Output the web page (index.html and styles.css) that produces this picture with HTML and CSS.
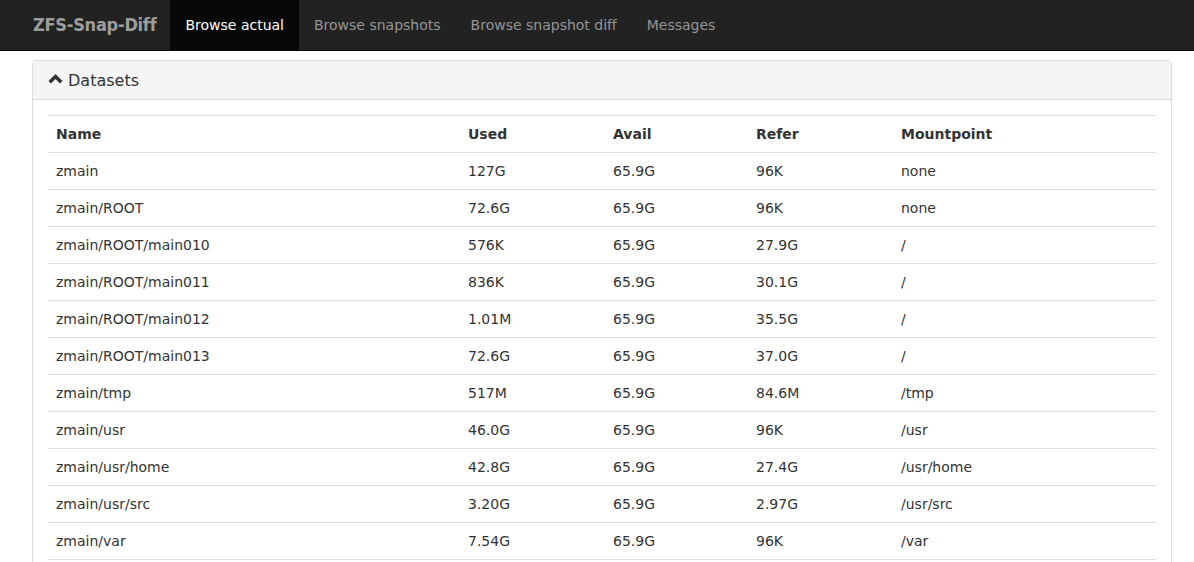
FILE: index.html
```html
<!DOCTYPE html>
<html>
<head>
<meta charset="utf-8">
<link rel="stylesheet" href="styles.css">
</head>
<body>
<nav class="navbar">
  <a class="brand" href="#">ZFS-Snap-Diff</a>
  <ul class="nav">
    <li class="active"><a href="#">Browse actual</a></li>
    <li><a href="#">Browse snapshots</a></li>
    <li><a href="#">Browse snapshot diff</a></li>
    <li><a href="#">Messages</a></li>
  </ul>
</nav>
<main class="container">
  <section class="panel">
    <div class="panel-heading">
      <svg class="chev" width="15" height="12" viewBox="0 0 15 12"><path d="M7.5 1 L14.5 8 L12 10.5 L7.5 6 L3 10.5 L0.5 8 Z" fill="#333"/></svg>
      <span class="panel-title">Datasets</span>
    </div>
    <div class="panel-body">
      <table class="table">
        <thead>
          <tr><th class="c-name">Name</th><th class="c-used">Used</th><th class="c-avail">Avail</th><th class="c-refer">Refer</th><th>Mountpoint</th></tr>
        </thead>
        <tbody>
          <tr><td>zmain</td><td>127G</td><td>65.9G</td><td>96K</td><td>none</td></tr>
          <tr><td>zmain/ROOT</td><td>72.6G</td><td>65.9G</td><td>96K</td><td>none</td></tr>
          <tr><td>zmain/ROOT/main010</td><td>576K</td><td>65.9G</td><td>27.9G</td><td>/</td></tr>
          <tr><td>zmain/ROOT/main011</td><td>836K</td><td>65.9G</td><td>30.1G</td><td>/</td></tr>
          <tr><td>zmain/ROOT/main012</td><td>1.01M</td><td>65.9G</td><td>35.5G</td><td>/</td></tr>
          <tr><td>zmain/ROOT/main013</td><td>72.6G</td><td>65.9G</td><td>37.0G</td><td>/</td></tr>
          <tr><td>zmain/tmp</td><td>517M</td><td>65.9G</td><td>84.6M</td><td>/tmp</td></tr>
          <tr><td>zmain/usr</td><td>46.0G</td><td>65.9G</td><td>96K</td><td>/usr</td></tr>
          <tr><td>zmain/usr/home</td><td>42.8G</td><td>65.9G</td><td>27.4G</td><td>/usr/home</td></tr>
          <tr><td>zmain/usr/src</td><td>3.20G</td><td>65.9G</td><td>2.97G</td><td>/usr/src</td></tr>
          <tr><td>zmain/var</td><td>7.54G</td><td>65.9G</td><td>96K</td><td>/var</td></tr>
        </tbody>
      </table>
    </div>
  </section>
</main>
</body>
</html>
```
FILE: styles.css
```css
* { box-sizing: border-box; }
html, body { margin: 0; padding: 0; }
body {
  font-family: "DejaVu Sans", Verdana, sans-serif;
  font-size: 14px;
  line-height: 20px;
  color: #333;
  background: #fff;
  overflow: hidden;
}
a { text-decoration: none; }
.navbar {
  height: 51px;
  background: #222;
  border-bottom: 1px solid #080808;
  display: flex;
  align-items: stretch;
  padding-left: 18px;
}
.brand {
  font-family: "DejaVu Sans Condensed", "DejaVu Sans", sans-serif;
  color: #9d9d9d;
  font-size: 18px;
  font-weight: bold;
  letter-spacing: -0.25px;
  line-height: 20px;
  padding: 15px 14px 15px 15px;
  height: 50px;
}
.nav {
  list-style: none;
  margin: 0;
  padding: 0;
  display: flex;
}
.nav li a {
  display: block;
  color: #959595;
  padding: 15px 15px;
  line-height: 20px;
  height: 50px;
}
.nav li.active a {
  color: #fff;
  background: #080808;
}
.container {
  padding: 9px 0 0 32px;
}
.panel {
  width: 1140px;
  border: 1px solid #ddd;
  border-radius: 4px;
  background: #fff;
  padding-bottom: 40px;
}
.panel-heading {
  background: #f5f5f5;
  border-bottom: 1px solid #ddd;
  border-radius: 3px 3px 0 0;
  height: 39px;
  padding: 0 15px;
  display: flex;
  align-items: center;
  gap: 5px;
}
.chev { display: block; margin-top: -2px; }
.panel-title {
  font-size: 16px;
  color: #333;
  padding-top: 1px;
}
.panel-body {
  padding: 15px 15px;
}
.table {
  width: 100%;
  border-collapse: collapse;
  border-spacing: 0;
}
.table th, .table td {
  text-align: left;
  padding: 8px 8px;
  line-height: 20px;
  border-top: 1px solid #ddd;
  vertical-align: top;
}
.table th {
  font-weight: bold;
  border-bottom: 1px solid #ddd;
}
.table tbody tr:last-child td { border-bottom: 1px solid #ddd; }
.c-name { width: 412px; }
.c-used { width: 145px; }
.c-avail { width: 143px; }
.c-refer { width: 145px; }
```
